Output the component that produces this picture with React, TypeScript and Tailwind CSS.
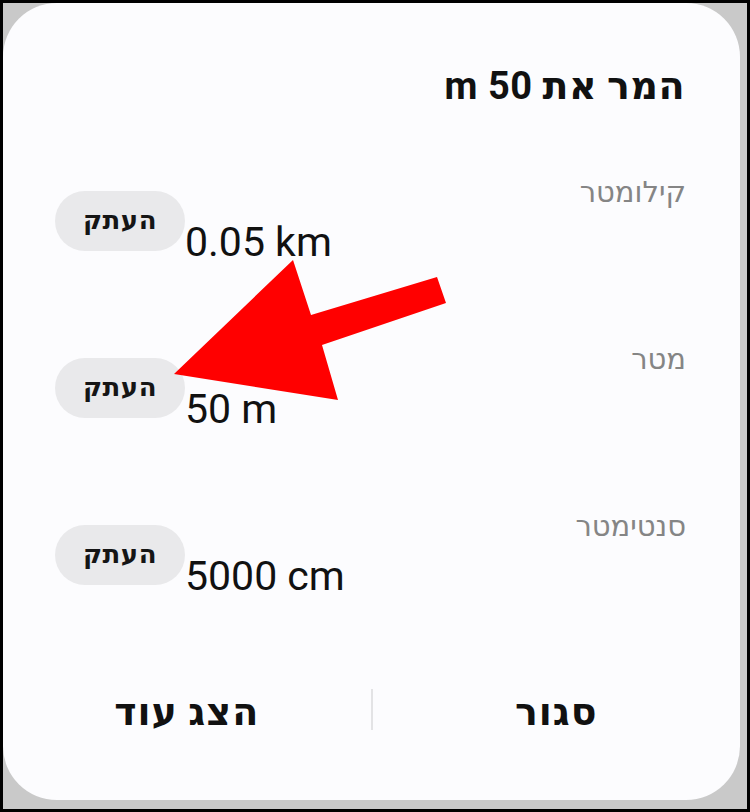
import React from 'react';

const font = { fontFamily: 'Roboto, "DejaVu Sans", "Liberation Sans", sans-serif' };

const rows = [
  { label: 'קילומטר', value: '0.05 km' },
  { label: 'מטר', value: '50 m' },
  { label: 'סנטימטר', value: '5000 cm' },
];

const CopyPill = () => (
  <button className="w-[130px] h-[60px] shrink-0 rounded-full bg-[#e9e9eb] text-[26px] tracking-[0.5px] font-semibold text-[#151515] flex items-center justify-center">
    העתק
  </button>
);

export default function App() {
  return (
    <div
      className="relative w-[750px] h-[812px] border-[3px] border-black bg-[#c9c9c9] overflow-hidden"
      style={font}
    >
      {/* Dialog */}
      <div className="w-[737px] h-[797px] rounded-[54px] bg-[#fcfcfe] flex flex-col pt-[62px]">
        <h1 dir="rtl" className="pr-[55px] text-[38px] tracking-[0.5px] leading-[43px] font-bold text-[#111]">
          המר את 50 m
        </h1>

        <div className="mt-[67px] flex flex-col gap-[76px]">
          {rows.map((r) => (
            <div key={r.label} className="flex items-center pl-[52px] pr-[54px]">
              <CopyPill />
              <div className="flex-1 flex flex-col">
                <div dir="rtl" className="text-[29px] leading-[34px] text-[#858585]">
                  {r.label}
                </div>
                <div className="mt-[10px] text-[41px] leading-[47px] text-[#111]">{r.value}</div>
              </div>
            </div>
          ))}
        </div>

        <div dir="rtl" className="mt-[89px] flex items-center h-[41px]">
          <button className="flex-1 text-[38px] tracking-[1px] leading-[41px] font-bold text-[#111] pt-[5px]">סגור</button>
          <div className="w-[2px] h-[41px] bg-[#e3e3e5]" />
          <button className="flex-1 text-[38px] tracking-[1px] leading-[41px] font-bold text-[#111] pt-[5px]">הצג עוד</button>
        </div>
      </div>

      {/* annotation arrow */}
      <svg
        className="absolute left-[-3px] top-[-3px] pointer-events-none"
        width="750"
        height="812"
        viewBox="0 0 750 812"
      >
        <polygon
          points="174,374 293,260 311,315 437,277 446,303 322,345 338,400"
          fill="#ff0000"
        />
      </svg>
    </div>
  );
}
